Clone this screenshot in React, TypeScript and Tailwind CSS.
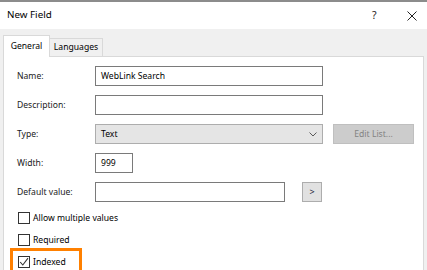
const font = { fontFamily: '"Noto Sans", "Open Sans", sans-serif' };

function Field({ label, children }: { label: string; children: React.ReactNode }) {
  return (
    <div className="flex items-center h-[20px]">
      <span className="w-[78px] text-[8.6px] text-[#1a1a1a]">{label}</span>
      {children}
    </div>
  );
}

function TextBox({ value, w }: { value?: string; w: string }) {
  return (
    <div className={`${w} h-[20px] border border-[#7a7a7a] bg-white flex items-center px-[5px] text-[8.6px] text-black`}>
      {value}
    </div>
  );
}

function Check({ label, checked }: { label: string; checked?: boolean }) {
  return (
    <div className="flex items-center h-[12px] gap-[3px] text-[8.6px] text-black">
      <div className="w-[12px] h-[12px] border border-[#333333] bg-white flex items-center justify-center">
        {checked && (
          <svg width="10" height="10" viewBox="0 0 10 10">
            <path d="M1.2 5 L3.8 8 L9 1.2" fill="none" stroke="#333" strokeWidth="1.1" />
          </svg>
        )}
      </div>
      <span>{label}</span>
    </div>
  );
}

export default function App() {
  return (
    <div className="w-[427px] h-[270px] overflow-hidden bg-[#f0f0f0] flex flex-col" style={font}>
      <div className="h-[2px] bg-[#8c8c8c]" />
      <div className="h-[27px] bg-white flex items-center pl-[7px] pr-[10px] text-[9.8px] text-black">
        <span className="flex-1">New Field</span>
        <span className="w-[12px] text-[10.5px] text-[#222]">?</span>
        <svg className="ml-[23px]" width="10" height="10" viewBox="0 0 10 10">
          <path d="M0.5 0.5 L9.5 9.5 M9.5 0.5 L0.5 9.5" stroke="#222" strokeWidth="1" />
        </svg>
      </div>
      <div className="pl-[3px] pt-[7px] flex-1 flex flex-col">
        <div className="flex items-end h-[21px] relative z-10">
          <div className="w-[47px] h-[22px] bg-white border border-b-0 border-[#d9d9d9] flex items-center justify-center text-[8.6px] text-black">
            General
          </div>
          <div className="w-[53px] h-[19px] bg-[#f0f0f0] border border-l-0 border-[#d9d9d9] flex items-center justify-center text-[8.6px] text-black">
            Languages
          </div>
        </div>
        <div className="w-[421px] flex-1 bg-white border border-[#d9d9d9] border-b-0 -mt-[1px] pl-[13px] pt-[9px] flex flex-col">
          <div className="flex flex-col gap-[9px]">
            <Field label="Name:">
              <TextBox value="WebLink Search" w="w-[228px]" />
            </Field>
            <Field label="Description:">
              <TextBox w="w-[228px]" />
            </Field>
            <Field label="Type:">
              <div className="w-[228px] h-[20px] border border-[#adadad] bg-[#e5e5e5] flex items-center pl-[5px] pr-[5px] text-[8.6px] text-black">
                <span className="flex-1">Text</span>
                <svg width="8" height="5" viewBox="0 0 8 5">
                  <path d="M0.5 0.5 L4 4 L7.5 0.5" fill="none" stroke="#5a5a5a" strokeWidth="1" />
                </svg>
              </div>
              <div className="ml-[10px] w-[81px] h-[20px] border border-[#bfbfbf] bg-[#cccccc] flex items-center justify-center text-[8.6px] text-[#838383]">
                Edit List...
              </div>
            </Field>
            <Field label="Width:">
              <TextBox value="999" w="w-[38px]" />
            </Field>
            <Field label="Default value:">
              <TextBox w="w-[190px]" />
              <div className="ml-[17px] w-[20px] h-[20px] border border-[#adadad] bg-[#e1e1e1] flex items-center justify-center text-[9px] text-[#1a1a3a]">
                &gt;
              </div>
            </Field>
          </div>
          <div className="pl-[1px] pt-[10px] flex flex-col gap-[10px]">
            <Check label="Allow multiple values" />
            <Check label="Required" />
            <div className="relative">
              <Check label="Indexed" checked />
              <div className="absolute -left-[8px] -top-[8px] w-[72px] h-[26px] border-[3px] border-[#ff8000]" />
            </div>
          </div>
        </div>
      </div>
    </div>
  );
}
